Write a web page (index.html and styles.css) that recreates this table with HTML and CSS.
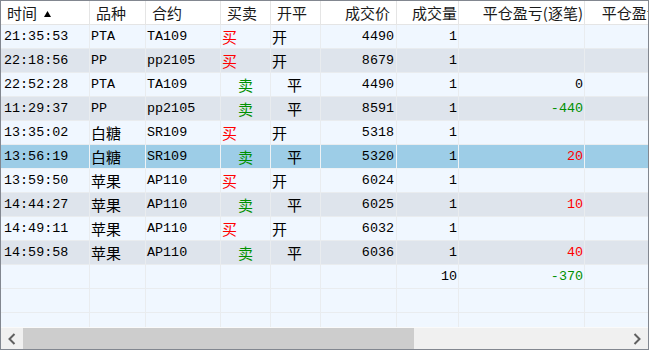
FILE: index.html
```html
<!DOCTYPE html>
<html lang="zh-CN">
<head>
<meta charset="utf-8">
<title>成交记录</title>
<link rel="stylesheet" href="styles.css">
</head>
<body>
<div class="win">
  <div class="grid">
    <div class="row head">
      <div class="c c1">时间<svg class="sort" width="7" height="6" viewBox="0 0 7 6"><polygon points="3.5,0 7,6 0,6" fill="#000"/></svg></div>
      <div class="c c2">品种</div>
      <div class="c c3">合约</div>
      <div class="c c4">买卖</div>
      <div class="c c5">开平</div>
      <div class="c c6 r">成交价</div>
      <div class="c c7 r">成交量</div>
      <div class="c c8 r">平仓盈亏(逐笔)</div>
      <div class="c c9 r">平仓盈亏(逐日)</div>
    </div>
    <div class="body">
      <div class="row a"><div class="c c1 num">21:35:53</div><div class="c c2 num">PTA</div><div class="c c3 num">TA109</div><div class="c c4 cjk buy">买</div><div class="c c5 cjk">开</div><div class="c c6 num r">4490</div><div class="c c7 num r">1</div><div class="c c8 num r"></div><div class="c c9"></div></div>
      <div class="row b"><div class="c c1 num">22:18:56</div><div class="c c2 num">PP</div><div class="c c3 num">pp2105</div><div class="c c4 cjk buy">买</div><div class="c c5 cjk">开</div><div class="c c6 num r">8679</div><div class="c c7 num r">1</div><div class="c c8 num r"></div><div class="c c9"></div></div>
      <div class="row a"><div class="c c1 num">22:52:28</div><div class="c c2 num">PTA</div><div class="c c3 num">TA109</div><div class="c c4 cjk sell">卖</div><div class="c c5 cjk ind">平</div><div class="c c6 num r">4490</div><div class="c c7 num r">1</div><div class="c c8 num r">0</div><div class="c c9"></div></div>
      <div class="row b"><div class="c c1 num">11:29:37</div><div class="c c2 num">PP</div><div class="c c3 num">pp2105</div><div class="c c4 cjk sell">卖</div><div class="c c5 cjk ind">平</div><div class="c c6 num r">8591</div><div class="c c7 num r">1</div><div class="c c8 num r neg">-440</div><div class="c c9"></div></div>
      <div class="row a"><div class="c c1 num">13:35:02</div><div class="c c2 cjk">白糖</div><div class="c c3 num">SR109</div><div class="c c4 cjk buy">买</div><div class="c c5 cjk">开</div><div class="c c6 num r">5318</div><div class="c c7 num r">1</div><div class="c c8 num r"></div><div class="c c9"></div></div>
      <div class="row sel"><div class="c c1 num">13:56:19</div><div class="c c2 cjk">白糖</div><div class="c c3 num">SR109</div><div class="c c4 cjk sell">卖</div><div class="c c5 cjk ind">平</div><div class="c c6 num r">5320</div><div class="c c7 num r">1</div><div class="c c8 num r pos">20</div><div class="c c9"></div></div>
      <div class="row a"><div class="c c1 num">13:59:50</div><div class="c c2 cjk">苹果</div><div class="c c3 num">AP110</div><div class="c c4 cjk buy">买</div><div class="c c5 cjk">开</div><div class="c c6 num r">6024</div><div class="c c7 num r">1</div><div class="c c8 num r"></div><div class="c c9"></div></div>
      <div class="row b"><div class="c c1 num">14:44:27</div><div class="c c2 cjk">苹果</div><div class="c c3 num">AP110</div><div class="c c4 cjk sell">卖</div><div class="c c5 cjk ind">平</div><div class="c c6 num r">6025</div><div class="c c7 num r">1</div><div class="c c8 num r pos">10</div><div class="c c9"></div></div>
      <div class="row a"><div class="c c1 num">14:49:11</div><div class="c c2 cjk">苹果</div><div class="c c3 num">AP110</div><div class="c c4 cjk buy">买</div><div class="c c5 cjk">开</div><div class="c c6 num r">6032</div><div class="c c7 num r">1</div><div class="c c8 num r"></div><div class="c c9"></div></div>
      <div class="row b"><div class="c c1 num">14:59:58</div><div class="c c2 cjk">苹果</div><div class="c c3 num">AP110</div><div class="c c4 cjk sell">卖</div><div class="c c5 cjk ind">平</div><div class="c c6 num r">6036</div><div class="c c7 num r">1</div><div class="c c8 num r pos">40</div><div class="c c9"></div></div>
      <div class="row a"><div class="c c1 num"></div><div class="c c2"></div><div class="c c3"></div><div class="c c4"></div><div class="c c5"></div><div class="c c6"></div><div class="c c7 num r">10</div><div class="c c8 num r neg">-370</div><div class="c c9"></div></div>
      <div class="row a"><div class="c c1"></div><div class="c c2"></div><div class="c c3"></div><div class="c c4"></div><div class="c c5"></div><div class="c c6"></div><div class="c c7"></div><div class="c c8"></div><div class="c c9"></div></div>
      <div class="row a"><div class="c c1"></div><div class="c c2"></div><div class="c c3"></div><div class="c c4"></div><div class="c c5"></div><div class="c c6"></div><div class="c c7"></div><div class="c c8"></div><div class="c c9"></div></div>
    </div>
  </div>
  <div class="hscroll">
    <div class="btn"><svg width="8" height="12" viewBox="0 0 8 12"><polyline points="6.5,1 1.5,6 6.5,11" fill="none" stroke="#606060" stroke-width="2"/></svg></div>
    <div class="track"><div class="thumb"></div></div>
    <div class="btn"><svg width="8" height="12" viewBox="0 0 8 12"><polyline points="1.5,1 6.5,6 1.5,11" fill="none" stroke="#606060" stroke-width="2"/></svg></div>
  </div>
</div>
</body>
</html>
```

FILE: styles.css
```css
* { box-sizing: border-box; }
html, body { margin: 0; padding: 0; background: #fff; }
.win {
  width: 649px;
  height: 350px;
  border: 1px solid #828790;
  display: flex;
  flex-direction: column;
  overflow: hidden;
  background: #f0f7ff;
}
.grid {
  flex: 1;
  overflow: hidden;
  display: flex;
  flex-direction: column;
}
.body { flex: 1; overflow: hidden; }
.row {
  display: grid;
  grid-template-columns: 89px 56px 75px 50px 50px 76px 62px 126px 124px;
  width: max-content;
  height: 24px;
}
.c {
  border-right: 1px solid #e9ecef;
  border-bottom: 1px solid #e9ecef;
  white-space: nowrap;
  overflow: hidden;
  line-height: 23px;
  color: #000;
  padding: 0 1px;
}
.head { background: #fff; }
.head .c {
  font-family: "Noto Sans CJK SC", "Noto Sans", sans-serif;
  font-size: 15px;
  padding: 0 6px;
  border-right: 1px solid #e5e5e5;
  border-bottom: 1px solid #e5e5e5;
  color: #1a1a1a;
}
.head .c.r { text-align: right; }
.sort { margin-left: 7px; vertical-align: 2px; }
.a { background: #f0f7ff; }
.b { background: #dee4ec; }
.sel { background: #9dcde7; }
.sel .c { border-color: #eef2f5; }
.num {
  font-family: "Liberation Mono", "DejaVu Sans Mono", monospace;
  font-size: 13.4px;
}
.cjk {
  font-family: "Noto Sans CJK SC", sans-serif;
  font-size: 15px;
}
.c1.num { padding-left: 3px; }
.r { text-align: right; padding-right: 2px; }
.c7.r, .c8.r { padding-right: 1px; }
.buy { color: #ff0000; }
.sell { color: #009000; padding-left: 17px; }
.ind { padding-left: 16px; }
.pos { color: #ff0000; }
.neg { color: #009000; }
.hscroll {
  height: 22px;
  display: flex;
  background: #f0f0f0;
  border-top: 1px solid #fafafa;
}
.btn {
  width: 22px;
  display: flex;
  align-items: center;
  justify-content: center;
}
.track { flex: 1; display: flex; }
.thumb { width: 391px; background: #cdcdcd; }
```
